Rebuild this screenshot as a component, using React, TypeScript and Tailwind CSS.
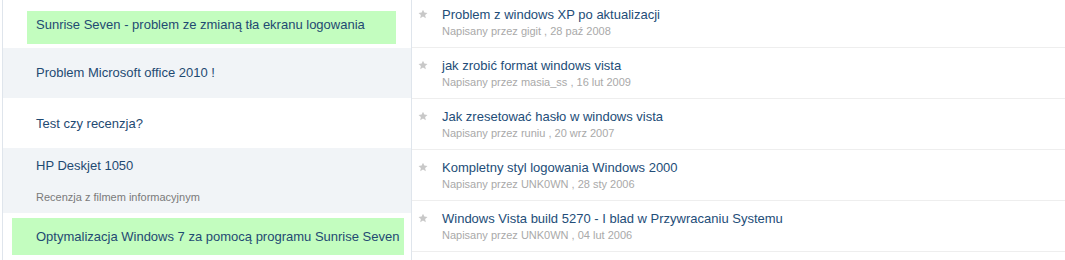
import React from "react";

const Star = () => (
  <svg width="10" height="10" viewBox="0 0 24 24" className="shrink-0">
    <path d="M12 1.5l3.2 7 7.6.8-5.7 5.1 1.6 7.5L12 18l-6.7 3.9 1.6-7.5L1.2 9.3l7.6-.8z" fill="#c8c8c8" />
  </svg>
);

const right = [
  { t: "Problem z windows XP po aktualizacji", a: "gigit", d: "28 paź 2008" },
  { t: "jak zrobić format windows vista", a: "masia_ss", d: "16 lut 2009" },
  { t: "Jak zresetować hasło w windows vista", a: "runiu", d: "20 wrz 2007" },
  { t: "Kompletny styl logowania Windows 2000", a: "UNK0WN", d: "28 sty 2006" },
  { t: "Windows Vista build 5270 - I blad w Przywracaniu Systemu", a: "UNK0WN", d: "04 lut 2006" },
];

export default function App() {
  return (
    <div
      className="w-[1065px] h-[260px] overflow-hidden bg-white flex"
      style={{ fontFamily: '"Liberation Sans", Arial, sans-serif' }}
    >
      <div className="w-[2px] shrink-0 bg-white" />
      <div className="w-[410px] shrink-0 border-l border-r border-[#dfe5ec] flex flex-col text-[13px] text-[#1f4a72]">
        <div className="h-[48px] shrink-0 bg-white pl-[24px] pr-[15px] pt-[11px]">
          <div className="h-[33px] bg-[#c3fdbf] pl-[9px] pt-[6px] leading-[16px]">
            Sunrise Seven - problem ze zmianą tła ekranu logowania
          </div>
        </div>
        <div className="h-[50px] shrink-0 bg-[#f1f4f7] pl-[33px] flex items-center">
          Problem Microsoft office 2010 !
        </div>
        <div className="h-[50px] shrink-0 bg-white pl-[33px] flex items-center pt-[2px]">
          Test czy recenzja?
        </div>
        <div className="h-[65px] shrink-0 bg-[#f1f4f7] pl-[33px] flex flex-col">
          <div className="mt-[10px] leading-[16px]">HP Deskjet 1050</div>
          <div className="mt-[16px] text-[11px] leading-[14px] text-[#7a7a7a]">
            Recenzja z filmem informacyjnym
          </div>
        </div>
        <div className="flex-1 bg-white pl-[9px] pr-[7px] pt-[5px]">
          <div className="h-[37px] bg-[#c3fdbf] pl-[24px] pt-[1px] flex items-center whitespace-nowrap">
            Optymalizacja Windows 7 za pomocą programu Sunrise Seven
          </div>
        </div>
      </div>
      <div className="flex-1 -mt-[3px] flex flex-col">
        {right.map((r, i) => (
          <div
            key={i}
            className="h-[51px] shrink-0 border-b border-[#eeeeee] flex pl-[6px] pt-[10px]"
          >
            <div className="w-[24px] pt-[2px]">
              <Star />
            </div>
            <div className="flex flex-col">
              <div className="text-[13px] leading-[16px] text-[#234d78] whitespace-nowrap">{r.t}</div>
              <div className="text-[11px] leading-[14px] mt-[1px] text-[#a9a9a9] whitespace-nowrap">
                Napisany przez {r.a} , {r.d}
              </div>
            </div>
          </div>
        ))}
      </div>
    </div>
  );
}
